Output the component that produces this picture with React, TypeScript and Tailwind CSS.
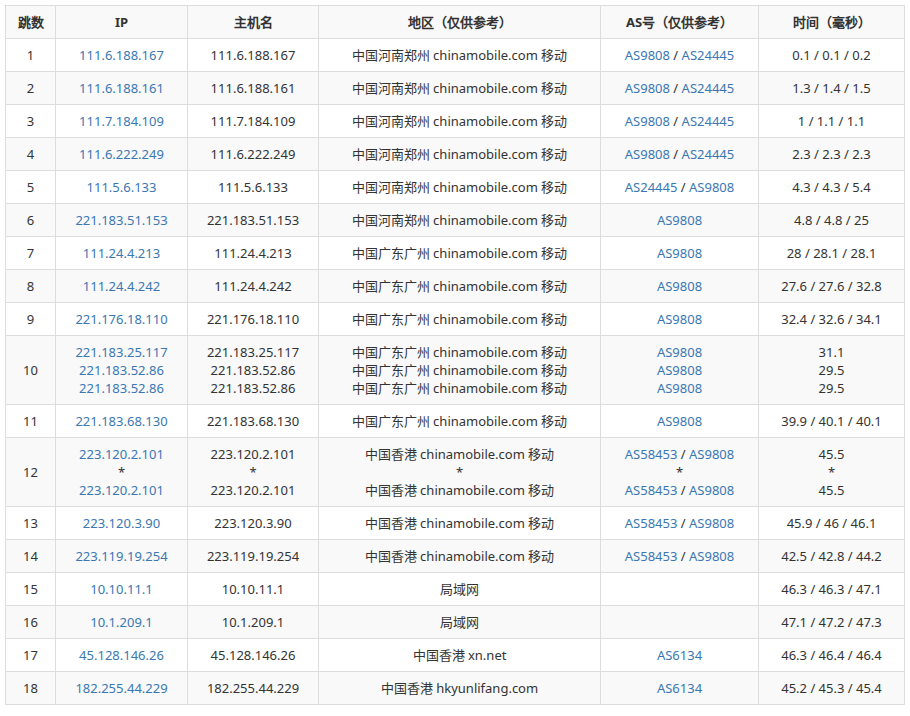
const L = "text-[#3a77b3]";
type Row = [string, string[], string[], string[], (string | string[])[], string[]];
const cn = "chinamobile.com 移动";
const rows: Row[] = [
  ["1", ["111.6.188.167"], ["111.6.188.167"], ["中国河南郑州 " + cn], [["AS9808", "AS24445"]], ["0.1 / 0.1 / 0.2"]],
  ["2", ["111.6.188.161"], ["111.6.188.161"], ["中国河南郑州 " + cn], [["AS9808", "AS24445"]], ["1.3 / 1.4 / 1.5"]],
  ["3", ["111.7.184.109"], ["111.7.184.109"], ["中国河南郑州 " + cn], [["AS9808", "AS24445"]], ["1 / 1.1 / 1.1"]],
  ["4", ["111.6.222.249"], ["111.6.222.249"], ["中国河南郑州 " + cn], [["AS9808", "AS24445"]], ["2.3 / 2.3 / 2.3"]],
  ["5", ["111.5.6.133"], ["111.5.6.133"], ["中国河南郑州 " + cn], [["AS24445", "AS9808"]], ["4.3 / 4.3 / 5.4"]],
  ["6", ["221.183.51.153"], ["221.183.51.153"], ["中国河南郑州 " + cn], ["AS9808"], ["4.8 / 4.8 / 25"]],
  ["7", ["111.24.4.213"], ["111.24.4.213"], ["中国广东广州 " + cn], ["AS9808"], ["28 / 28.1 / 28.1"]],
  ["8", ["111.24.4.242"], ["111.24.4.242"], ["中国广东广州 " + cn], ["AS9808"], ["27.6 / 27.6 / 32.8"]],
  ["9", ["221.176.18.110"], ["221.176.18.110"], ["中国广东广州 " + cn], ["AS9808"], ["32.4 / 32.6 / 34.1"]],
  ["10", ["221.183.25.117", "221.183.52.86", "221.183.52.86"], ["221.183.25.117", "221.183.52.86", "221.183.52.86"], ["中国广东广州 " + cn, "中国广东广州 " + cn, "中国广东广州 " + cn], ["AS9808", "AS9808", "AS9808"], ["31.1", "29.5", "29.5"]],
  ["11", ["221.183.68.130"], ["221.183.68.130"], ["中国广东广州 " + cn], ["AS9808"], ["39.9 / 40.1 / 40.1"]],
  ["12", ["223.120.2.101", "*", "223.120.2.101"], ["223.120.2.101", "*", "223.120.2.101"], ["中国香港 " + cn, "*", "中国香港 " + cn], [["AS58453", "AS9808"], "*", ["AS58453", "AS9808"]], ["45.5", "*", "45.5"]],
  ["13", ["223.120.3.90"], ["223.120.3.90"], ["中国香港 " + cn], [["AS58453", "AS9808"]], ["45.9 / 46 / 46.1"]],
  ["14", ["223.119.19.254"], ["223.119.19.254"], ["中国香港 " + cn], [["AS58453", "AS9808"]], ["42.5 / 42.8 / 44.2"]],
  ["15", ["10.10.11.1"], ["10.10.11.1"], ["局域网"], [""], ["46.3 / 46.3 / 47.1"]],
  ["16", ["10.1.209.1"], ["10.1.209.1"], ["局域网"], [""], ["47.1 / 47.2 / 47.3"]],
  ["17", ["45.128.146.26"], ["45.128.146.26"], ["中国香港 xn.net"], ["AS6134"], ["46.3 / 46.4 / 46.4"]],
  ["18", ["182.255.44.229"], ["182.255.44.229"], ["中国香港 hkyunlifang.com"], ["AS6134"], ["45.2 / 45.3 / 45.4"]],
];
const td = "border border-[#dddddd] px-1 py-[7px] text-center align-middle";
const widths = ["w-[50px]", "w-[132px]", "w-[131px]", "w-[282px]", "w-[158px]", "w-[146px]"];
export default function App() {
  return (
    <div lang="zh-CN" className="p-[5px] bg-white font-['Noto_Sans_CJK_SC','Noto_Sans',sans-serif]">
      <table className="border-collapse table-fixed w-[899px] text-[13px] leading-[18px] text-[#333]">
        <colgroup>
          {widths.map((w) => <col key={w} className={w} />)}
        </colgroup>
        <thead>
          <tr className="bg-[#f9f9f9]">
            {["跳数", "IP", "主机名", "地区（仅供参考）", "AS号（仅供参考）", "时间（毫秒）"].map((h) => (
              <th key={h} className={td + " font-bold py-[7.5px]"}>{h}</th>
            ))}
          </tr>
        </thead>
        <tbody>
          {rows.map((r, i) => (
            <tr key={i} className={i % 2 === 0 ? "bg-white" : "bg-[#f9f9f9]"}>
              <td className={td}>{r[0]}</td>
              <td className={td}>{r[1].map((x, j) => <div key={j} className={x === "*" ? "" : L}>{x}</div>)}</td>
              <td className={td}>{r[2].map((x, j) => <div key={j}>{x}</div>)}</td>
              <td className={td}>{r[3].map((x, j) => <div key={j}>{x}</div>)}</td>
              <td className={td}>{r[4].map((x, j) =>
                Array.isArray(x) ? <div key={j}><span className={L}>{x[0]}</span> / <span className={L}>{x[1]}</span></div>
                  : <div key={j} className={x === "*" ? "" : L}>{x || "\u00a0"}</div>)}</td>
              <td className={td}>{r[5].map((x, j) => <div key={j}>{x}</div>)}</td>
            </tr>
          ))}
        </tbody>
      </table>
    </div>
  );
}
